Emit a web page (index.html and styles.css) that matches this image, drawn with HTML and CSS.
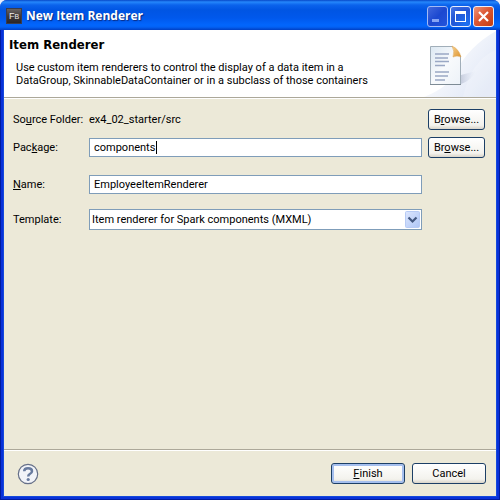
FILE: index.html
```html
<!DOCTYPE html>
<html lang="en">
<head>
<meta charset="utf-8">
<title>New Item Renderer</title>
<link rel="stylesheet" href="styles.css">
</head>
<body>
<main class="window">
  <header class="titlebar">
    <svg class="app-icon" viewBox="0 0 16 16" aria-hidden="true">
      <defs><linearGradient id="app" x2="0" y2="1"><stop stop-color="#6c6664"/><stop offset=".5" stop-color="#403a3a"/><stop offset="1" stop-color="#292426"/></linearGradient></defs>
      <rect x=".5" y=".5" width="15" height="15" fill="url(#app)" stroke="#3a3c4c"/>
      <text x="3" y="11" class="app-letter">F<tspan class="app-small">B</tspan></text>
    </svg>
    <h1 class="title">New Item Renderer</h1>
    <div class="controls">
      <button class="control minimize" type="button" aria-label="Minimize" disabled><svg viewBox="0 0 19 19"><path d="M4 12h7v3H4z" fill="#86a4f4"/></svg></button>
      <button class="control" type="button" aria-label="Maximize"><svg viewBox="0 0 19 19"><path d="M4 4h11v11H4zM5 7v7h9V7z" fill="#fff" fill-rule="evenodd"/></svg></button>
      <button class="control close" type="button" aria-label="Close"><svg viewBox="0 0 19 19"><path d="M5 5l9 9M14 5l-9 9" stroke="#fff" stroke-width="2.2" fill="none"/></svg></button>
    </div>
  </header>
  <div class="content">
    <section class="banner">
      <div class="intro">
        <h2 class="heading">Item Renderer</h2>
        <p class="description">Use custom item renderers to control the display of a data item in a<br>DataGroup, SkinnableDataContainer or in a subclass of those containers</p>
      </div>
      <svg class="banner-art" viewBox="0 0 76 67" aria-hidden="true">
        <defs>
          <linearGradient id="glow" x1="0" y1="0" x2="1" y2=".7"><stop offset=".2" stop-color="#fff"/><stop offset="1" stop-color="#e0e7f6"/></linearGradient>
          <linearGradient id="paper" x2="1" y2="1"><stop stop-color="#dce8f2"/><stop offset=".5" stop-color="#f8fafc"/><stop offset="1" stop-color="#edf2f8"/></linearGradient>
          <linearGradient id="fold" x2="1" y2="1"><stop stop-color="#f7d08d"/><stop offset="1" stop-color="#dd9430"/></linearGradient>
          <linearGradient id="shade" x2="1"><stop stop-color="#aeb6cb"/><stop offset="1" stop-color="#dce4f3" stop-opacity="0"/></linearGradient>
        </defs>
        <path d="M76 1Q48 17 36 42Q29 57 4 67H76z" fill="url(#glow)"/>
        <path d="M76 20Q51 30 43 67H76z" fill="#fff" opacity=".2"/>
        <path d="M41 45L56 41Q52 50 41 54z" fill="url(#shade)" opacity=".6"/>
        <path d="M10.500 16.500h22L40.500 26v28.500h-30z" fill="url(#paper)" stroke="#a1aeb9"/>
        <path d="M32 16Q39 19 41 27Q37 25 33 27Q35 21 32 16z" fill="url(#fold)" stroke="#dfa452" stroke-width=".5"/>
        <path d="M15 24h14M15 28h13M15 31.500h14M15 35.500h10M15 42h14M15 46h13M15 50h10" stroke="#9aa8c4" stroke-width="1.300"/>
        <path d="M10 54.500h31" stroke="#7e8b95"/>
      </svg>
    </section>
    <form class="dialog">
      <div class="fields">
        <span class="label">So<u>u</u>rce Folder:</span>
        <output class="value">ex4_02_starter/src</output>
        <button class="button" type="button">B<u>r</u>owse...</button>

        <label class="label" for="package">Pac<u>k</u>age:</label>
        <div class="entry"><input class="input" id="package" type="text" value="components"><span class="caret"></span></div>
        <button class="button" type="button">Br<u>o</u>wse...</button>

        <label class="label name" for="name"><u>N</u>ame:</label>
        <div class="entry name"><input class="input" id="name" type="text" value="EmployeeItemRenderer"></div>

        <label class="label template" for="template">Template:</label>
        <div class="entry template">
          <select class="select" id="template"><option>Item renderer for Spark components (MXML)</option></select>
          <svg class="arrow" viewBox="0 0 15 17" aria-hidden="true">
            <defs><linearGradient id="drop" x2="1" y2="1"><stop stop-color="#dce6fe"/><stop offset="1" stop-color="#aec6f6"/></linearGradient></defs>
            <rect x=".5" y=".5" width="14" height="16" rx="1" fill="url(#drop)" stroke="#b7cbf5"/>
            <path d="M3.500 6.500l4 4 4-4" fill="none" stroke="#435880" stroke-width="2.200"/>
          </svg>
        </div>
      </div>
      <footer class="footer">
        <button class="help" type="button" aria-label="Help">
          <svg viewBox="0 0 22 22"><circle cx="11" cy="11" r="9.700" fill="#f1f3f8" stroke="#667088" stroke-width="1.200"/><path d="M7.200 8.300Q7.200 5.300 11 5.300Q15 5.300 15 8.200Q15 9.900 12.800 11Q11.200 11.900 11.200 13.500" fill="none" stroke="#687b9f" stroke-width="2.500"/><circle cx="11.200" cy="16.500" r="1.600" fill="#687b9f"/></svg>
        </button>
        <button class="button wide default" type="submit"><u>F</u>inish</button>
        <button class="button wide" type="button">Cancel</button>
      </footer>
    </form>
  </div>
</main>
</body>
</html>
```
FILE: styles.css
```css
* { box-sizing: border-box; }

body {
  margin: 0;
  background: #e9eefb;
  color: #000;
  font: 11px/13px Roboto, "Liberation Sans", sans-serif;
}

button, input, select { font: inherit; color: inherit; }
u { text-underline-offset: 1px; }
button svg { display: block; }

.window {
  display: flex;
  flex-direction: column;
  min-height: 100vh;
  border-radius: 7px 7px 0 0;
  background: linear-gradient(#0b3fd6, #0831d9);
  overflow: hidden;
}

.titlebar {
  position: relative;
  z-index: 1;
  display: flex;
  align-items: center;
  height: 30px;
  padding: 2px 6px 0;
  background: linear-gradient(#0748c8 0, #2587fb 2px, #0b63ec 5px, #0055e3 10px, #0058ec 18px, #0266fd 25px, #0362f5 27px, #003fc4 30px);
}

.app-icon { width: 16px; height: 16px; }
.app-letter { font: 9px "Liberation Sans", sans-serif; fill: #eee; }
.app-small { font-size: 7px; }

.title {
  flex: 1;
  margin: 0 0 0 4px;
  color: #fff;
  font: bold 12px/18px "Open Sans", sans-serif;
  text-shadow: 1px 1px 1px #0a2c83;
}

.controls { display: flex; gap: 2px; }

.control {
  width: 21px;
  height: 21px;
  padding: 0;
  border: 1px solid #e9effd;
  border-radius: 3px;
  background: radial-gradient(circle at 80% 90%, #1c70f2, #2456d6 60%, #4a79e6);
}

.minimize {
  border-color: #a3baf5;
  background: linear-gradient(135deg, #4168dd, #1c48d0 50%, #2254dc);
}

.close { background: linear-gradient(135deg, #ee9579, #dc5734 45%, #c33d12); }

.content {
  display: flex;
  flex: 1;
  flex-direction: column;
  margin: 0 4px 4px;
  background: #ece9d8;
  box-shadow: 0 0 0 1px #1449dc, 0 0 0 3px #0831d9, 0 0 0 4px #001ba0;
}

.banner {
  display: flex;
  justify-content: space-between;
  border-bottom: 1px solid #aca899;
  background: #fff;
  box-shadow: 0 1px #fff;
}

.intro { padding: 7px 0 0 5px; }
.heading { margin: 0; font: bold 13px/16px "DejaVu Sans Condensed", "DejaVu Sans", sans-serif; }
.description { margin: 8px 0 0 7px; white-space: nowrap; }
.banner-art { flex: none; width: 76px; height: 67px; }
.dialog { display: flex; flex: 1; flex-direction: column; }

.fields {
  display: grid;
  flex: 1;
  grid-template-columns: 70px 1fr 57px;
  align-content: start;
  align-items: center;
  gap: 7px 6px;
  padding: 11px 11px 0 9px;
}

.label { white-space: nowrap; }
.entry { position: relative; display: grid; }
.name { grid-row: 3; margin-top: 10px; }
.template { grid-row: 4; margin-top: 8px; }

.input {
  width: 100%;
  height: 19px;
  padding: 0 4px;
  border: 1px solid #7f9db9;
  background: #fff;
  outline: 0;
}

.caret {
  position: absolute;
  top: 3px;
  left: 67px;
  width: 1px;
  height: 13px;
  background: #000;
}

.select {
  width: 100%;
  height: 21px;
  padding: 0 20px 0 2px;
  border: 1px solid #7f9db9;
  border-radius: 0;
  background: #fff;
  appearance: none;
}

.arrow {
  position: absolute;
  top: 2px;
  right: 2px;
  width: 15px;
  height: 17px;
  pointer-events: none;
}

.button {
  height: 21px;
  padding: 0;
  border: 1px solid #1c3f66;
  border-radius: 3px;
  background: linear-gradient(#fff, #f3f2ed 80%, #d9d4c9);
  text-align: center;
}

.wide { width: 74px; }
.default { box-shadow: inset 0 0 0 2px #a5bfee; }

.footer {
  display: flex;
  align-items: center;
  gap: 7px;
  height: 47px;
  padding: 1px 10px 0 13px;
  border-top: 1px solid #aca899;
  box-shadow: inset 0 1px #fff;
}

.help {
  width: 22px;
  height: 22px;
  margin-right: auto;
  padding: 0;
  border: 0;
  background: none;
}
```
